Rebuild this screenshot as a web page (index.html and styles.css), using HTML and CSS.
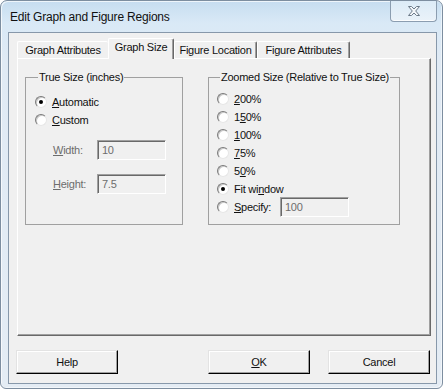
FILE: index.html
```html
<!DOCTYPE html>
<html lang="en">
<head>
    <meta charset="UTF-8">
    <title>Edit Graph and Figure Regions</title>
    <link rel="stylesheet" href="styles.css">
</head>
<body>

<div class="window">
    <div class="titlebar">
        <span class="title">Edit Graph and Figure Regions</span>
        <span class="close">
            <svg width="14" height="12" viewBox="0 0 14 12">
                <polygon points="1.5,1.5 4.5,1.5 7,4 9.5,1.5 12.5,1.5 8.7,6 12.5,10.5 9.5,10.5 7,8 4.5,10.5 1.5,10.5 5.3,6"
                         fill="#f4f7fa" stroke="#6c7a89" stroke-width="1" stroke-linejoin="round"/>
            </svg>
        </span>
    </div>

    <div class="client">
        <div class="tabs">
            <div class="tab tab-attr">Graph Attributes</div>
            <div class="tab tab-size active">Graph Size</div>
            <div class="tab tab-loc">Figure Location</div>
            <div class="tab tab-fig">Figure Attributes</div>
        </div>

        <div class="panel">
            <fieldset class="group group-true">
                <legend>True Size (inches)</legend>
                <div class="radio-row">
                    <span class="radio checked"></span>
                    <span><u>A</u>utomatic</span>
                </div>
                <div class="radio-row">
                    <span class="radio"></span>
                    <span><u>C</u>ustom</span>
                </div>
                <div class="field-row first">
                    <span class="field-label"><u>W</u>idth:</span>
                    <span class="field">10</span>
                </div>
                <div class="field-row">
                    <span class="field-label"><u>H</u>eight:</span>
                    <span class="field">7.5</span>
                </div>
            </fieldset>

            <fieldset class="group group-zoom">
                <legend>Zoomed Size (Relative to True Size)</legend>
                <div class="radio-row">
                    <span class="radio"></span>
                    <span><u>2</u>00%</span>
                </div>
                <div class="radio-row">
                    <span class="radio"></span>
                    <span>1<u>5</u>0%</span>
                </div>
                <div class="radio-row">
                    <span class="radio"></span>
                    <span><u>1</u>00%</span>
                </div>
                <div class="radio-row">
                    <span class="radio"></span>
                    <span><u>7</u>5%</span>
                </div>
                <div class="radio-row">
                    <span class="radio"></span>
                    <span>5<u>0</u>%</span>
                </div>
                <div class="radio-row">
                    <span class="radio checked"></span>
                    <span>Fit wi<u>n</u>dow</span>
                </div>
                <div class="radio-row">
                    <span class="radio"></span>
                    <span class="specify-label"><u>S</u>pecify:</span>
                    <span class="field">100</span>
                </div>
            </fieldset>
        </div>

        <div class="buttons">
            <button class="btn">Help</button>
            <span class="spacer"></span>
            <button class="btn"><u>O</u>K</button>
            <button class="btn">Cancel</button>
        </div>
    </div>
</div>

</body>
</html>
```

FILE: styles.css
```css
body {
    margin: 0;
    background-color: #fff;
    font-family: "Liberation Sans", Arial, sans-serif;
    font-size: 11px;
    letter-spacing: -0.25px;
    color: #111;
}

.window {
    display: flex;
    flex-direction: column;
    box-sizing: border-box;
    width: 443px;
    height: 389px;
    padding: 0 5px 4px 7px;
    border: 1px solid #7d8ea0;
    border-radius: 7px 7px 6px 6px;
    background: linear-gradient(to bottom, #c6ddf0 0, #d9e9f6 22px, #e0eaf4 60px, #e4ecf4 100%);
    box-shadow: inset 1px 1px 0 rgba(255, 255, 255, 0.7), inset -1px -1px 0 rgba(255, 255, 255, 0.5);
}

.titlebar {
    display: flex;
    justify-content: space-between;
    align-items: flex-start;
    height: 31px;
}

.title {
    margin-top: 9px;
    padding-left: 2px;
    font-size: 12px;
    letter-spacing: -0.2px;
}

.close {
    display: flex;
    align-items: center;
    justify-content: center;
    box-sizing: border-box;
    width: 47px;
    height: 21px;
    border: 1px solid #8b9db0;
    border-top: none;
    border-radius: 0 0 4px 4px;
    background: linear-gradient(to bottom, #dcebf7, #eaf2f9);
    box-shadow: inset 0 -1px 0 rgba(255, 255, 255, 0.8);
}

.client {
    flex: 1;
    display: flex;
    flex-direction: column;
    border: 1px solid #8798aa;
    background-color: #f0f0f0;
}

/* tabs */

.tabs {
    display: flex;
    align-items: flex-end;
    height: 20px;
    margin: 5px 0 0 8px;
}

.tab {
    box-sizing: border-box;
    height: 17px;
    padding-top: 2px;
    text-align: center;
    border-top: 1px solid #fff;
    border-left: 1px solid #fff;
    border-right: 1px solid #696969;
    border-radius: 2px 2px 0 0;
    box-shadow: inset -1px 0 0 #a0a0a0;
    white-space: nowrap;
}

.tab-attr { width: 91px; border-right: none; box-shadow: none; }
.tab-size { width: 66px; }
.tab-loc { width: 83px; }
.tab-fig { width: 93px; }

.tab.active {
    position: relative;
    height: 21px;
    margin-bottom: -1px;
    padding-top: 2px;
    background-color: #f0f0f0;
    z-index: 1;
}

.panel {
    display: flex;
    gap: 25px;
    box-sizing: border-box;
    height: 278px;
    margin: 0 5px 0 8px;
    padding: 12px 0 0 7px;
    border: 1px solid;
    border-color: #fff #696969 #696969 #fff;
    box-shadow: inset -1px -1px 0 #a0a0a0;
}

/* group boxes */

.group {
    box-sizing: border-box;
    height: 154px;
    margin: 0;
    border: 1px solid #a0a0a0;
    border-radius: 0;
}

.group legend {
    margin-left: 3px;
    padding: 0 1px;
    line-height: 13px;
}

.group-true {
    width: 158px;
    padding: 9px 0 0 9px;
}

.group-zoom {
    width: 192px;
    padding: 6px 0 0 8px;
}

.radio-row {
    display: flex;
    align-items: center;
    gap: 4px;
    height: 18px;
}

.radio {
    box-sizing: border-box;
    width: 12px;
    height: 12px;
    margin-right: 1px;
    border: 1px solid;
    border-color: #7a7a7a #e6e6e6 #e6e6e6 #7a7a7a;
    border-radius: 50%;
    background-color: #fff;
    box-shadow: inset 1px 1px 0 #c8c8c8;
    position: relative;
}

.radio.checked::after {
    content: "";
    position: absolute;
    left: 3px;
    top: 3px;
    width: 4px;
    height: 4px;
    border-radius: 50%;
    background-color: #000;
}

.field-row {
    display: flex;
    align-items: center;
    margin-top: 14px;
    padding-left: 18px;
}

.field-row.first {
    margin-top: 11px;
}

.field-label {
    width: 44px;
    color: #6d6d6d;
}

.field {
    box-sizing: border-box;
    width: 69px;
    height: 20px;
    padding: 3px 0 0 4px;
    border: 1px solid;
    border-color: #a0a0a0 #fff #fff #a0a0a0;
    box-shadow: inset 1px 1px 0 #696969;
    color: #6d6d6d;
    background-color: #f0f0f0;
}

.specify-label {
    width: 42px;
}

.group-zoom .radio-row:last-child {
    height: 20px;
    margin-top: -1px;
}

/* buttons */

.buttons {
    display: flex;
    gap: 18px;
    margin-top: 14px;
    padding: 0 6px 0 7px;
}

.spacer {
    flex: 1;
}

.btn {
    box-sizing: border-box;
    width: 102px;
    height: 24px;
    padding: 0;
    border: 1px solid;
    border-color: #e3e3e3 #000 #000 #e3e3e3;
    border-radius: 0;
    background-color: #f0f0f0;
    box-shadow: inset -1px -1px 0 #a0a0a0, inset 1px 1px 0 #fff;
    font-family: "Liberation Sans", Arial, sans-serif;
    font-size: 11px;
    letter-spacing: -0.25px;
    color: #111;
}
```
